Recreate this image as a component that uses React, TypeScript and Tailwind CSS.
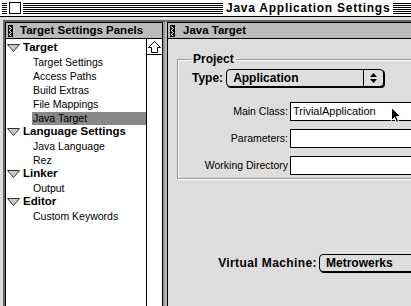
import React from 'react';

function Stripes({ className }: { className: string }) {
  return (
    <div className={`flex flex-col gap-px ${className}`}>
      <div className="h-px bg-black" />
      <div className="h-px bg-black" />
      <div className="h-px bg-black" />
      <div className="h-px bg-black" />
      <div className="h-px bg-black" />
      <div className="h-px bg-black" />
    </div>
  );
}

function Grip() {
  return (
    <svg width="5" height="12" viewBox="0 0 5 12" className="shrink-0">
      <rect x="0" y="0" width="5" height="12" fill="#000" />
      <polyline points="1,1.5 3.5,3.5 1,5.5 3.5,7.5 1,9.5 3.5,11" fill="none" stroke="#fff" strokeWidth="1" />
    </svg>
  );
}

function Triangle() {
  return (
    <svg width="13" height="8" viewBox="0 0 13 8" className="shrink-0">
      <polygon points="0.5,0.5 12.5,0.5 6.5,7.5" fill="#c8c8c8" stroke="#333" strokeWidth="1" />
    </svg>
  );
}

function Heading({ label }: { label: string }) {
  return (
    <div className="h-[14px] flex items-center pl-[1px] gap-[3px]">
      <Triangle />
      <span className="font-bold text-[11.5px] leading-none">{label}</span>
    </div>
  );
}

function Item({ label, selected }: { label: string; selected?: boolean }) {
  return (
    <div className="h-[14px] flex items-center pl-[26px]">
      <div className={`flex-1 h-[13px] flex items-center pl-[1px] ${selected ? 'bg-[#888888]' : ''}`}>
        <span className="text-[10.5px] leading-none">{label}</span>
      </div>
    </div>
  );
}

function Popup({ label, width, arrows }: { label: string; width: string; arrows?: boolean }) {
  return (
    <div className={`${width} h-[18px] shrink-0 border border-black rounded-[4px] bg-[#dddddd] shadow-[1px_1px_0_#000] flex items-center`}>
      <span className="flex-1 pl-[6px] font-bold text-[12px] leading-none">{label}</span>
      {arrows && (
        <div className="w-[20px] h-full border-l border-black flex flex-col items-center justify-center gap-[2px]">
          <svg width="7" height="4" viewBox="0 0 7 4"><polygon points="3.5,0 7,4 0,4" fill="#000" /></svg>
          <svg width="7" height="4" viewBox="0 0 7 4"><polygon points="0,0 7,0 3.5,4" fill="#000" /></svg>
        </div>
      )}
    </div>
  );
}

function Field({ label, value }: { label: string; value?: string }) {
  return (
    <>
      <span className="text-right text-[10.5px] leading-none self-center">{label}</span>
      <div className="w-[200px] h-[19px] border border-black bg-white flex items-center pl-[2px]">
        <span className="text-[11px] leading-none">{value}</span>
      </div>
    </>
  );
}

export default function App() {
  return (
    <div className="w-[411px] h-[306px] overflow-hidden bg-[#dddddd] relative text-black" style={{ fontFamily: '"Liberation Sans", Arial, sans-serif' }}>
      {/* title bar */}
      <div className="h-[17px] bg-white border-b border-black flex items-center">
        <Stripes className="w-[5px] ml-[2px]" />
        <div className="mx-[2px] w-[12px] h-[12px] border border-black bg-white shrink-0" />
        <Stripes className="w-[200px] shrink-0" />
        <span className="px-[3px] font-bold text-[12px] tracking-[0.75px] leading-none whitespace-nowrap">Java Application Settings</span>
        <Stripes className="flex-1" />
      </div>

      <div className="h-[289px] pt-[3px] pl-[3px] flex">
        <div className="flex flex-1 min-w-0 border-l-2 border-t-2 border-[#666666]">
          {/* left panel */}
          <div className="w-[158px] shrink-0 border-l border-t border-r border-black flex flex-col">
            <div className="h-[16px] bg-[#bbbbbb] border-b border-black flex items-center pl-[2px] gap-[7px]">
              <Grip />
              <span className="font-bold text-[11.5px] leading-none">Target Settings Panels</span>
            </div>
            <div className="flex flex-1">
              <div className="flex-1 bg-white pt-[2px]">
                <Heading label="Target" />
                <Item label="Target Settings" />
                <Item label="Access Paths" />
                <Item label="Build Extras" />
                <Item label="File Mappings" />
                <Item label="Java Target" selected />
                <Heading label="Language Settings" />
                <Item label="Java Language" />
                <Item label="Rez" />
                <Heading label="Linker" />
                <Item label="Output" />
                <Heading label="Editor" />
                <Item label="Custom Keywords" />
              </div>
              <div className="w-[16px] bg-white border-l border-black">
                <div className="h-[16px] border-b border-black flex items-center justify-center">
                  <svg width="13" height="12" viewBox="0 0 13 12">
                    <path d="M6.5 0.5 L12.5 6.5 H9.5 V11.5 H3.5 V6.5 H0.5 Z" fill="#fff" stroke="#000" strokeWidth="1" />
                  </svg>
                </div>
              </div>
            </div>
          </div>

          <div className="w-[2px] bg-[#999999]" />
          <div className="w-[2px] bg-[#bbbbbb]" />

          {/* right panel */}
          <div className="flex-1 min-w-0 border-l border-t border-black flex flex-col">
            <div className="h-[16px] bg-[#bbbbbb] border-b border-black flex items-center pl-[2px] gap-[8px]">
              <Grip />
              <span className="font-bold text-[11.5px] leading-none whitespace-nowrap">Java Target</span>
            </div>
            <div className="flex-1 pl-[9px]">
              <fieldset className="mt-[14px] w-[300px] border border-[#999999] shadow-[inset_1px_1px_0_#fff,1px_1px_0_#fff] pl-[14px] pb-[3px]">
                <legend className="ml-[-1px] px-[2px] font-bold text-[12px] leading-[12px]">Project</legend>
                <div className="mt-[4px] flex items-center gap-[3px]">
                  <span className="font-bold text-[12px] leading-none">Type:</span>
                  <Popup label="Application" width="w-[158px]" arrows />
                </div>
                <div className="mt-[15px] grid grid-cols-[96px_200px] gap-x-[2px] gap-y-[8px]">
                  <Field label="Main Class:" value="TrivialApplication" />
                  <Field label="Parameters:" />
                  <Field label="Working Directory" />
                </div>
              </fieldset>
              <div className="mt-[75px] ml-[41px] flex items-center gap-[2px]">
                <span className="w-[99px] shrink-0 text-right font-bold text-[12px] tracking-[0.4px] leading-none whitespace-nowrap">Virtual Machine:</span>
                <Popup label="Metrowerks" width="w-[120px]" />
              </div>
            </div>
          </div>
        </div>
      </div>

      {/* mouse cursor */}
      <svg className="absolute left-[391px] top-[107px]" width="11" height="17" viewBox="0 0 11 17">
        <path d="M0.5 0.5 V13.5 L3.5 10.5 L5.5 15.5 L7.5 14.5 L5.5 9.5 H9.5 Z" fill="#000" stroke="#fff" strokeWidth="1" />
      </svg>
    </div>
  );
}
